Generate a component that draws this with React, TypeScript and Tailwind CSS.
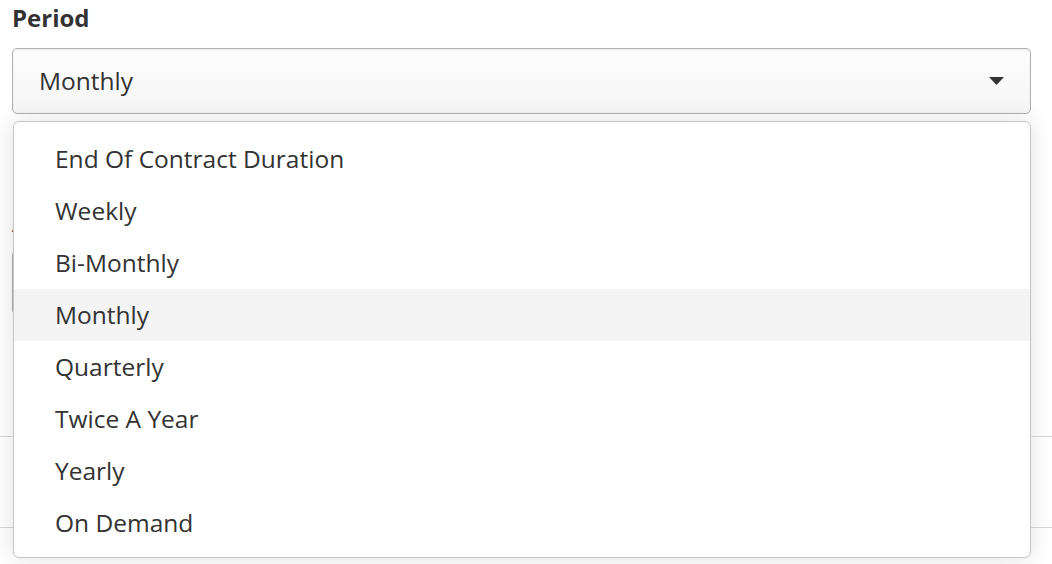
import { useState } from 'react';

const options = [
  'End Of Contract Duration',
  'Weekly',
  'Bi-Monthly',
  'Monthly',
  'Quarterly',
  'Twice A Year',
  'Yearly',
  'On Demand',
];

function Caret() {
  return (
    <svg width="15" height="8" viewBox="0 0 15 8" className="fill-[#333]">
      <path d="M0 0h15L7.5 8z" />
    </svg>
  );
}

export default function App() {
  const [value] = useState('Monthly');

  return (
    <div className="relative h-[564px] w-[1052px] overflow-hidden bg-white font-['Open_Sans','Noto_Sans',sans-serif] text-[#333]">
      <div className="pl-[12px] pr-[21px] pt-[1px]">
        <label className="block text-[24px] font-bold leading-[34px]">Period</label>

        <div className="relative mt-[13px]">
          <div className="flex h-[66px] items-center justify-between rounded-[5px] border border-[#b0b0b0] bg-gradient-to-b from-[#fdfdfd] to-[#f6f6f6] pl-[26px] pr-[26px] shadow-[inset_0_1px_2px_rgba(0,0,0,0.08)]">
            <span className="text-[24.5px]">{value}</span>
            <Caret />
          </div>

          {/* dropdown list */}
          <ul className="absolute left-[1px] right-0 top-[73px] z-10 rounded-[6px] border border-[#c6c6c6] bg-white pb-[8px] pt-[11px] shadow-[0_0_24px_rgba(0,0,0,0.12)]">
            {options.map((o) => (
              <li
                key={o}
                className={
                  'flex h-[52px] items-center pl-[41px] text-[24.5px] ' +
                  (o === value ? 'bg-[#f4f4f4]' : '')
                }
              >
                {o}
              </li>
            ))}
          </ul>
        </div>

        {/* content under the dropdown */}
        <label className="mt-[93px] block text-[24px] font-bold leading-[32px]">Amount</label>
        <div className="mt-[11px] h-[65px] rounded-[5px] border border-[#b0b0b0] bg-white" />
      </div>
      <div className="mt-[121px] border-t border-[#d6d6dc]" />
      <div className="mt-[90px] border-t border-[#d6d6dc]" />
    </div>
  );
}
